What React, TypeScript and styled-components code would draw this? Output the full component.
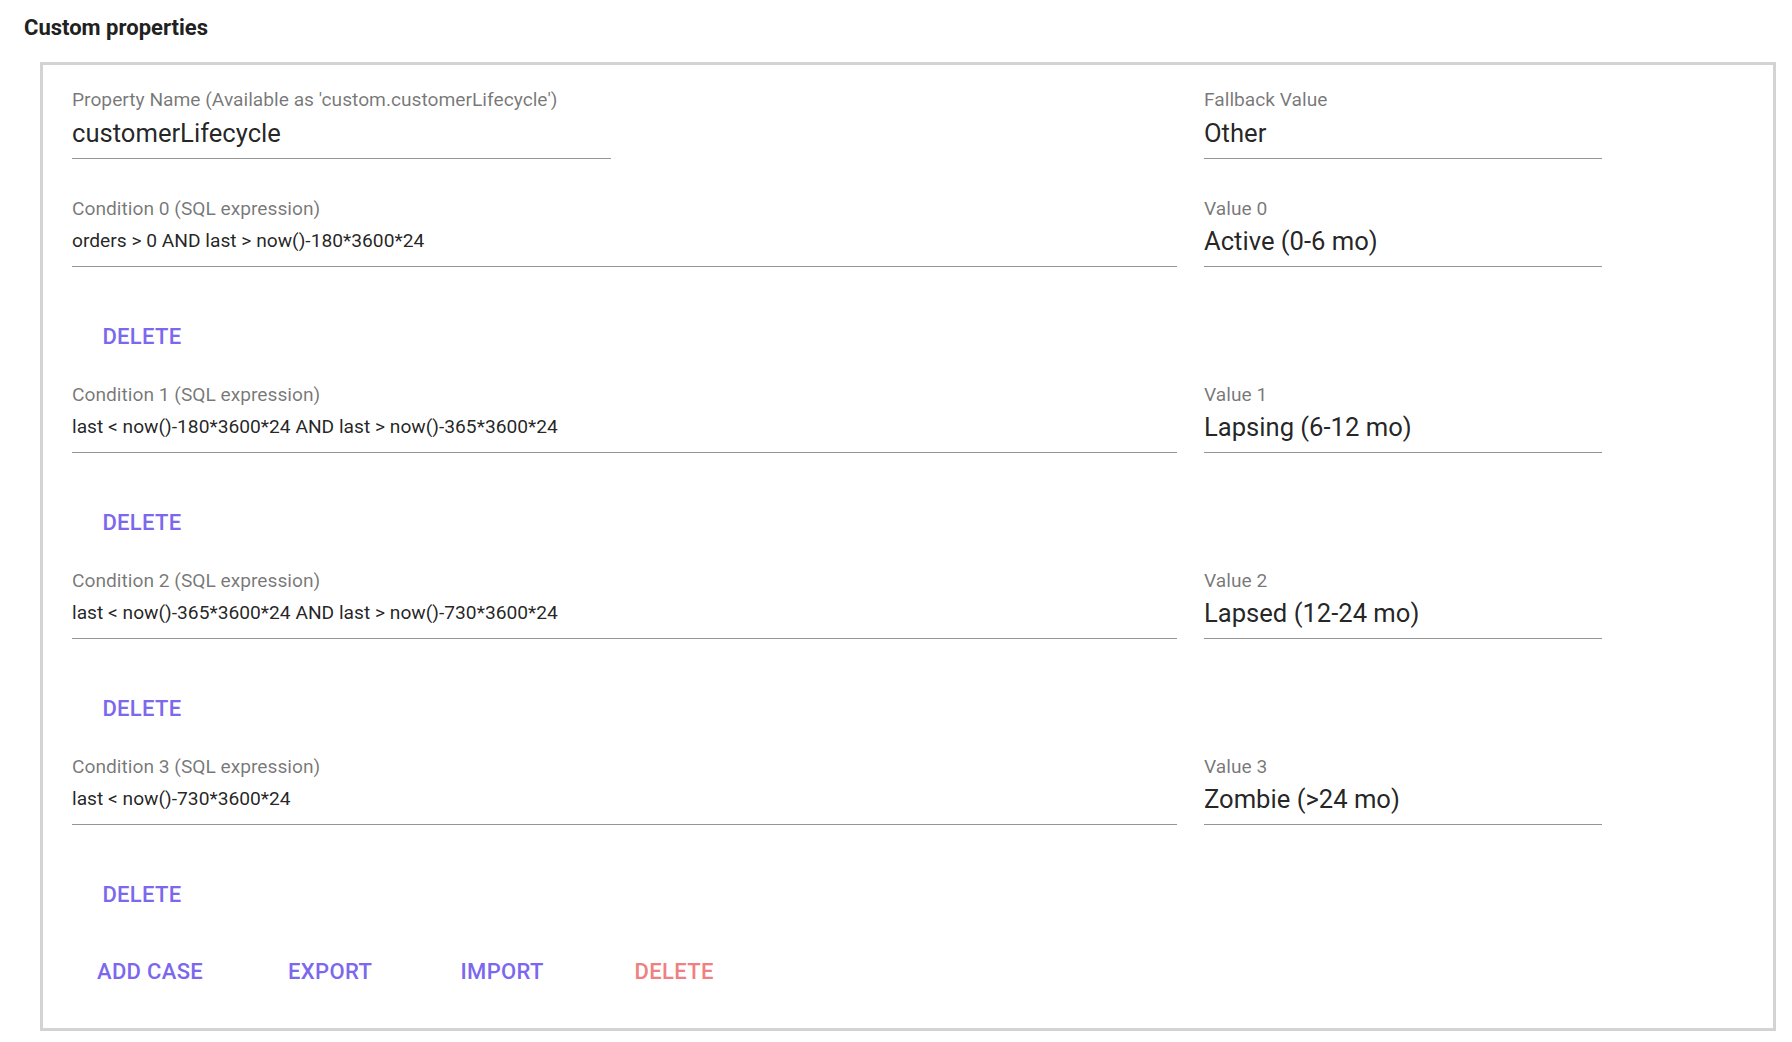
import React from "react";
import styled, { createGlobalStyle } from "styled-components";

const Global = createGlobalStyle`
  html, body { margin: 0; padding: 0; background: #ffffff; }
  body { font-family: Roboto, "Liberation Sans", Arial, sans-serif; color: rgba(0,0,0,0.87); }
  * { box-sizing: border-box; }
`;

const Page = styled.div`
  padding: 15px 16px 14px 24px;
`;

const Heading = styled.h2`
  margin: 0 0 21px 0;
  font-size: 22px;
  line-height: 26px;
  font-weight: 700;
  color: #212121;
`;

const Panel = styled.section`
  margin-left: 16px;
  width: 1736px;
  border: 3px solid #d3d3d3;
  padding: 23px 0 35px 29px;
  display: flex;
  flex-direction: column;
`;

const FieldRow = styled.div`
  display: grid;
  grid-template-columns: 1105px 398px;
  column-gap: 27px;
  align-items: start;
`;

const TopRow = styled(FieldRow)`
  margin-bottom: 13px;
`;

const Field = styled.div<{ $width?: number }>`
  display: flex;
  flex-direction: column;
  width: ${(p) => (p.$width ? `${p.$width}px` : "100%")};
  border-bottom: 1px solid rgba(0, 0, 0, 0.42);
`;

const Label = styled.label`
  font-size: 19.2px;
  line-height: 23px;
  color: rgba(0, 0, 0, 0.54);
  white-space: nowrap;
`;

const Value = styled.div<{ $top?: number }>`
  font-size: 25.6px;
  line-height: 30px;
  color: rgba(0, 0, 0, 0.87);
  margin-top: ${(p) => p.$top ?? 7}px;
  padding-bottom: 10px;
  white-space: nowrap;
`;

const Expression = styled.div`
  font-size: 19.2px;
  line-height: 23px;
  color: rgba(0, 0, 0, 0.87);
  margin-top: 9px;
  padding-bottom: 14px;
  white-space: nowrap;
`;

const Block = styled.div`
  display: flex;
  flex-direction: column;
  padding-top: 25px;
`;

const ButtonRow = styled.div<{ $top: number }>`
  margin-top: ${(p) => p.$top}px;
  margin-left: 9px;
  display: flex;
  gap: 50px;
`;

const TextButton = styled.button<{ $danger?: boolean }>`
  background: none;
  border: none;
  cursor: pointer;
  min-width: 122px;
  font-family: Roboto, "Liberation Sans", Arial, sans-serif;
  font-weight: 500;
  font-size: 22px;
  line-height: 26px;
  letter-spacing: 0.33px;
  text-transform: uppercase;
  text-align: center;
  padding: 8px 16px;
  color: ${(p) => (p.$danger ? "lightcoral" : "mediumslateblue")};
`;

const conditions = [
  { cond: "orders > 0 AND last > now()-180*3600*24", value: "Active (0-6 mo)" },
  { cond: "last < now()-180*3600*24 AND last > now()-365*3600*24", value: "Lapsing (6-12 mo)" },
  { cond: "last < now()-365*3600*24 AND last > now()-730*3600*24", value: "Lapsed (12-24 mo)" },
  { cond: "last < now()-730*3600*24", value: "Zombie (>24 mo)" },
];

export default function App() {
  return (
    <Page>
      <Global />
      <Heading>Custom properties</Heading>
      <Panel>
        <TopRow>
          <Field $width={539}>
            <Label>Property Name (Available as 'custom.customerLifecycle')</Label>
            <Value>customerLifecycle</Value>
          </Field>
          <Field>
            <Label>Fallback Value</Label>
            <Value>Other</Value>
          </Field>
        </TopRow>
        {conditions.map((c, i) => (
          <Block key={i}>
            <FieldRow>
              <Field>
                <Label>Condition {i} (SQL expression)</Label>
                <Expression>{c.cond}</Expression>
              </Field>
              <Field>
                <Label>Value {i}</Label>
                <Value $top={6}>{c.value}</Value>
              </Field>
            </FieldRow>
            <ButtonRow $top={49}>
              <TextButton>Delete</TextButton>
            </ButtonRow>
          </Block>
        ))}
        <ButtonRow $top={35}>
          <TextButton>Add case</TextButton>
          <TextButton>Export</TextButton>
          <TextButton>Import</TextButton>
          <TextButton $danger>Delete</TextButton>
        </ButtonRow>
      </Panel>
    </Page>
  );
}
